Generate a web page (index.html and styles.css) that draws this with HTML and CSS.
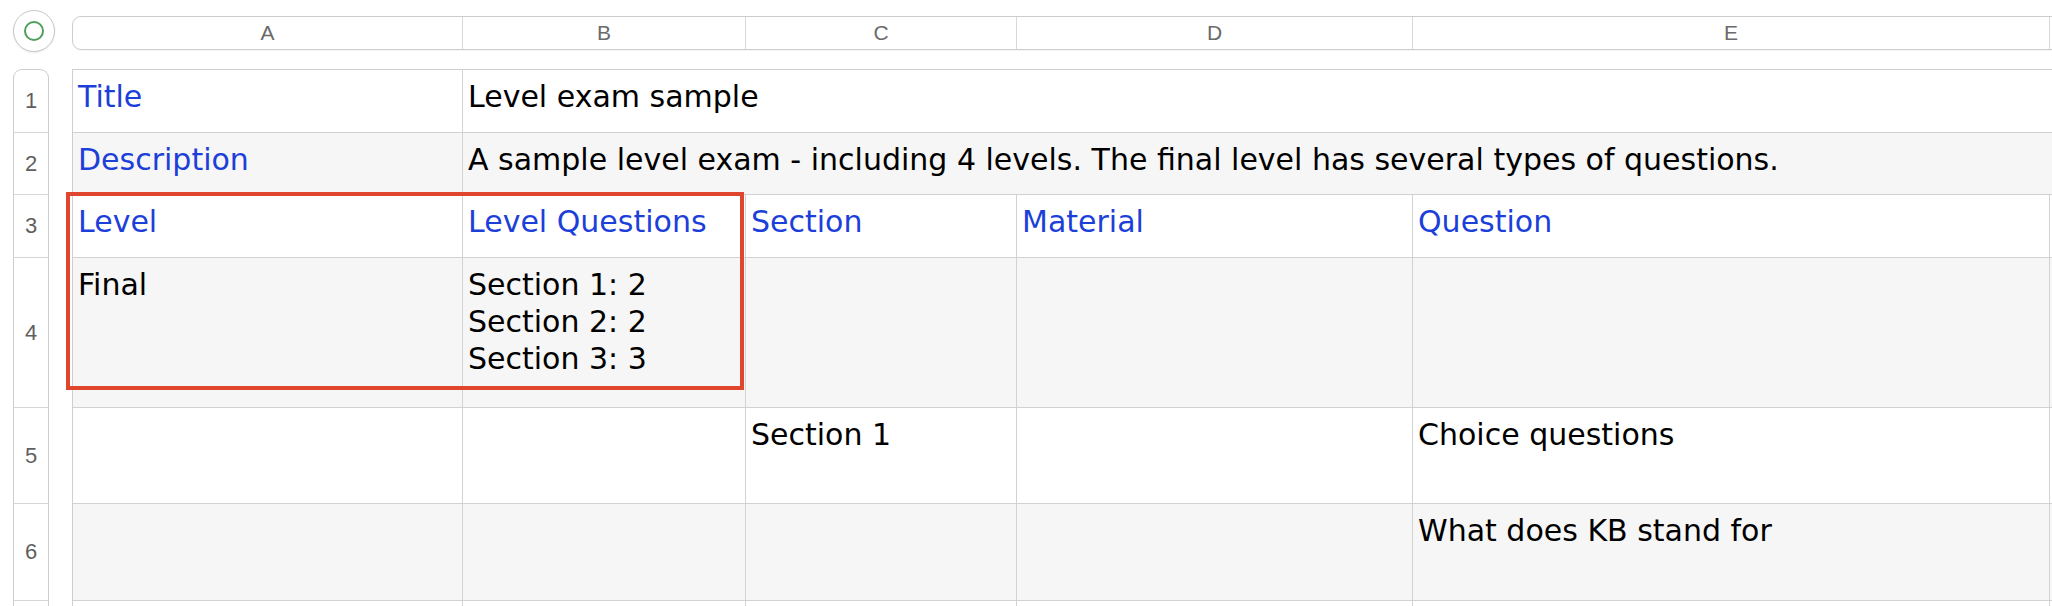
FILE: index.html
```html
<!DOCTYPE html>
<html>
<head>
<meta charset="utf-8">
<link rel="stylesheet" href="styles.css">
</head>
<body>
<div class="sheet">
  <div class="top">
    <div class="corner"><span class="ring"></span></div>
    <div class="colhead">
      <div class="ch">A</div>
      <div class="ch">B</div>
      <div class="ch">C</div>
      <div class="ch">D</div>
      <div class="ch">E</div>
      <div class="ch"></div>
    </div>
  </div>
  <div class="main">
    <div class="rowhead">
      <div class="rh">1</div>
      <div class="rh">2</div>
      <div class="rh">3</div>
      <div class="rh">4</div>
      <div class="rh">5</div>
      <div class="rh">6</div>
      <div class="rh"></div>
    </div>
    <div class="gridwrap">
      <div class="grid">
        <div class="c lbl">Title</div>
        <div class="c span">Level exam sample</div>

        <div class="c alt lbl">Description</div>
        <div class="c alt span">A sample level exam - including 4 levels. The final level has several types of questions.</div>

        <div class="c lbl">Level</div>
        <div class="c lbl">Level Questions</div>
        <div class="c lbl">Section</div>
        <div class="c lbl">Material</div>
        <div class="c lbl">Question</div>
        <div class="c"></div>

        <div class="c alt">Final</div>
        <div class="c alt">Section 1: 2<br>Section 2: 2<br>Section 3: 3</div>
        <div class="c alt"></div>
        <div class="c alt"></div>
        <div class="c alt"></div>
        <div class="c alt"></div>

        <div class="c"></div>
        <div class="c"></div>
        <div class="c">Section 1</div>
        <div class="c"></div>
        <div class="c">Choice questions</div>
        <div class="c"></div>

        <div class="c alt"></div>
        <div class="c alt"></div>
        <div class="c alt"></div>
        <div class="c alt"></div>
        <div class="c alt">What does KB stand for</div>
        <div class="c alt"></div>

        <div class="c"></div>
        <div class="c"></div>
        <div class="c"></div>
        <div class="c"></div>
        <div class="c"></div>
        <div class="c"></div>
      </div>
      <div class="sel"></div>
    </div>
  </div>
</div>
</body>
</html>
```
FILE: styles.css
```css
* { box-sizing: border-box; }
html, body {
  margin: 0;
  padding: 0;
  background: #fff;
  overflow: hidden;
}
body {
  width: 2052px;
  height: 606px;
}
.sheet {
  padding: 10px 0 0 13px;
}
.top {
  display: flex;
  align-items: flex-start;
  gap: 17px;
  height: 42px;
  margin-bottom: 17px;
}
.corner {
  flex: none;
  width: 42px;
  height: 42px;
  border: 1px solid #c8c8c8;
  border-radius: 50%;
  background: #fff;
  box-shadow: 0 1px 2px rgba(0, 0, 0, 0.08);
  display: flex;
  align-items: center;
  justify-content: center;
}
.ring {
  width: 20px;
  height: 20px;
  border: 2px solid #4f9e5c;
  border-radius: 50%;
}
.colhead {
  flex: none;
  margin-top: 6px;
  width: 2200px;
  height: 34px;
  border: 1px solid #cdcdcd;
  border-radius: 9px;
  display: grid;
  grid-template-columns: 390px 283px 271px 396px 637px 200px;
  box-shadow: 0 1px 1px rgba(0, 0, 0, 0.04);
}
.ch {
  border-right: 1px solid #d8d8d8;
  display: flex;
  align-items: center;
  justify-content: center;
  font: 21px "Liberation Sans", Arial, sans-serif;
  color: #6a6a6a;
}
.main {
  display: flex;
  align-items: flex-start;
  gap: 23px;
}
.rowhead {
  flex: none;
  width: 36px;
  border: 1px solid #cdcdcd;
  border-bottom: none;
  border-radius: 9px 9px 0 0;
  display: grid;
  grid-template-rows: 63px 62px 63px 150px 96px 97px 60px;
}
.rh {
  border-bottom: 1px solid #d6d6d6;
  display: flex;
  align-items: center;
  justify-content: center;
  font: 22px "Liberation Sans", Arial, sans-serif;
  color: #5f5f5f;
}
.gridwrap {
  flex: none;
  position: relative;
}
.grid {
  display: grid;
  grid-template-columns: 390px 283px 271px 396px 637px 200px;
  grid-template-rows: 63px 62px 63px 150px 96px 97px 60px;
  border-top: 1px solid #cfcfcf;
  border-left: 1px solid #cfcfcf;
}
.c {
  border-right: 1px solid #d2d2d2;
  border-bottom: 1px solid #d2d2d2;
  padding: 8px 5px 0 5px;
  font: 30px/37px "DejaVu Sans", Verdana, sans-serif;
  color: #000;
  white-space: nowrap;
  background: #fff;
}
.alt {
  background: #f6f6f6;
}
.lbl {
  color: #1d3fd9;
}
.span {
  grid-column: 2 / -1;
}
.sel {
  position: absolute;
  left: -6px;
  top: 123px;
  width: 678px;
  height: 198px;
  border: 4px solid #e0452d;
}
```
